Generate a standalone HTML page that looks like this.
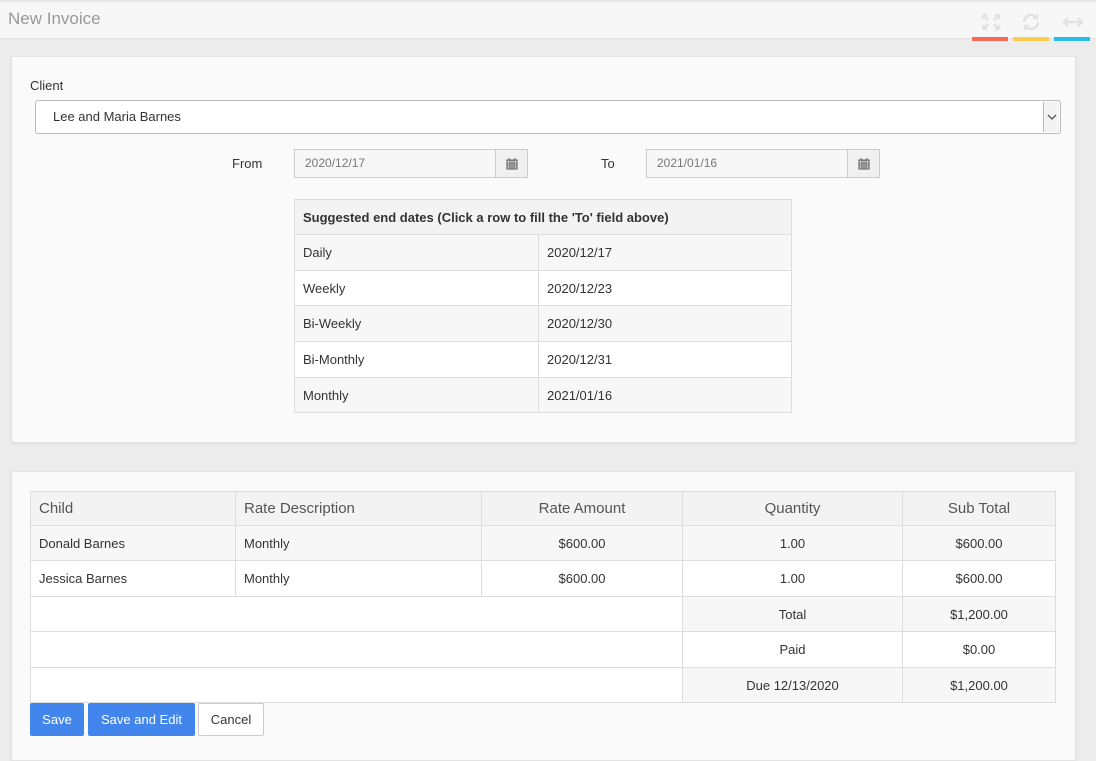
<!DOCTYPE html><html><head><style>
*{box-sizing:border-box;margin:0;padding:0}
body{width:1096px;height:742px;background:#ececec;font-family:"Liberation Sans",sans-serif;font-size:13px;color:#333;position:relative;overflow:hidden}
.a{position:absolute}
.hdr{left:0;top:0;width:1096px;height:39px;background:#f7f7f7;border-bottom:1px solid #e2e2e2;border-top:2px solid #e6e6e6}
.card{background:#fafafa;border:1px solid #e3e3e3;box-shadow:0 1px 2px rgba(0,0,0,.08)}
table{border-collapse:collapse;position:absolute}
td{border:1px solid #ddd;padding:0 8px}
.inp{background:#f7f7f7;border:1px solid #ccc;color:#777;font-size:12px;padding-left:10px;line-height:27px}
.add{background:#f0f0f0;border:1px solid #ccc;width:33px;height:29px;display:flex;align-items:center;justify-content:center}
.btn{height:33px;line-height:33px;text-align:center;border-radius:2px;font-size:13px}
</style></head><body>
<div class="a hdr"><div class="a" style="left:8px;top:7px;font-size:17px;color:#999">New Invoice</div>
<svg class="a" style="left:980px;top:10px" width="22" height="20" viewBox="0 0 22 20" fill="none" stroke="#e2e2e2" stroke-width="2.5"><path d="M3 3l5 5M3 3h4M3 3v4M19 3l-5 5M19 3h-4M19 3v4M3 17l5-5M3 17h4M3 17v-4M19 17l-5-5M19 17h-4M19 17v-4"/></svg>
<svg class="a" style="left:1020px;top:10px" width="22" height="20" viewBox="0 0 22 20" fill="none" stroke="#e2e2e2" stroke-width="2.5"><path d="M4 10a7 7 0 0 1 12-5M18 10a7 7 0 0 1-12 5"/><path d="M17 2v4h-4M5 18v-4h4"/></svg>
<svg class="a" style="left:1062px;top:12px" width="22" height="16" viewBox="0 0 22 16" fill="none" stroke="#e2e2e2" stroke-width="2.5"><path d="M2 8h18M6 4L2 8l4 4M16 4l4 4-4 4"/></svg>
</div>
<div class="a" style="left:972px;top:37px;width:36px;height:4px;background:#f96a52"></div>
<div class="a" style="left:1013px;top:37px;width:36px;height:4px;background:#fdcb4e"></div>
<div class="a" style="left:1054px;top:37px;width:36px;height:4px;background:#27bde8"></div>

<div class="a card" style="left:11px;top:56px;width:1065px;height:387px"></div>
<div class="a" style="left:30px;top:78px">Client</div>
<div class="a" style="left:35px;top:100px;width:1026px;height:34px;background:#fff;border:1px solid #bbb;border-radius:3px;line-height:32px;padding-left:17px">Lee and Maria Barnes</div>
<div class="a" style="left:1043px;top:102px;width:16px;height:30px;border-left:1px solid #bbb;background:#f3f3f3"><svg style="margin:11px 0 0 3px" width="10" height="8"><path d="M1 2l4 4 4-4" stroke="#555" fill="none" stroke-width="1.3"/></svg></div>
<div class="a" style="left:232px;top:156px">From</div>
<div class="a inp" style="left:294px;top:149px;width:202px;height:29px">2020/12/17</div>
<div class="a add" style="left:495px;top:149px"><svg width="12" height="12" viewBox="0 0 12 12"><rect x="1" y="2" width="10" height="9" fill="none" stroke="#555"/><path d="M1 5h10M4 2v9M6 2v9M8 2v9M1 7h10M1 9h10M3 0v3M9 0v3" stroke="#555" stroke-width=".8"/></svg></div>
<div class="a" style="left:601px;top:156px">To</div>
<div class="a inp" style="left:646px;top:149px;width:202px;height:29px">2021/01/16</div>
<div class="a add" style="left:847px;top:149px"><svg width="12" height="12" viewBox="0 0 12 12"><rect x="1" y="2" width="10" height="9" fill="none" stroke="#555"/><path d="M1 5h10M4 2v9M6 2v9M8 2v9M1 7h10M1 9h10M3 0v3M9 0v3" stroke="#555" stroke-width=".8"/></svg></div>

<table style="left:294px;top:199px;width:498px">
<tr style="height:35px;background:#f3f3f3"><td colspan="2" style="font-weight:bold">Suggested end dates (Click a row to fill the 'To' field above)</td></tr>
<tr style="height:36px;background:#f7f7f7"><td style="width:244px">Daily</td><td>2020/12/17</td></tr>
<tr style="height:35px;background:#fff"><td>Weekly</td><td>2020/12/23</td></tr>
<tr style="height:36px;background:#f7f7f7"><td>Bi-Weekly</td><td>2020/12/30</td></tr>
<tr style="height:36px;background:#fff"><td>Bi-Monthly</td><td>2020/12/31</td></tr>
<tr style="height:35px;background:#f7f7f7"><td>Monthly</td><td>2021/01/16</td></tr>
</table>

<div class="a card" style="left:11px;top:471px;width:1065px;height:290px"></div>
<table style="left:30px;top:491px;width:1026px">
<tr style="height:34px;background:#f3f3f3;font-size:15px;color:#555"><td style="width:205px">Child</td><td style="width:246px">Rate Description</td><td style="width:201px;text-align:center">Rate Amount</td><td style="width:220px;text-align:center">Quantity</td><td style="text-align:center">Sub Total</td></tr>
<tr style="height:35px;background:#f7f7f7"><td>Donald Barnes</td><td>Monthly</td><td style="text-align:center">$600.00</td><td style="text-align:center">1.00</td><td style="text-align:center">$600.00</td></tr>
<tr style="height:36px;background:#fff"><td>Jessica Barnes</td><td>Monthly</td><td style="text-align:center">$600.00</td><td style="text-align:center">1.00</td><td style="text-align:center">$600.00</td></tr>
<tr style="height:35px;background:#fff"><td colspan="3"></td><td style="text-align:center;background:#f7f7f7">Total</td><td style="text-align:center;background:#f7f7f7">$1,200.00</td></tr>
<tr style="height:36px;background:#fff"><td colspan="3"></td><td style="text-align:center">Paid</td><td style="text-align:center">$0.00</td></tr>
<tr style="height:35px;background:#fff"><td colspan="3"></td><td style="text-align:center;background:#f7f7f7">Due 12/13/2020</td><td style="text-align:center;background:#f7f7f7">$1,200.00</td></tr>
</table>
<div class="a btn" style="left:30px;top:703px;width:54px;background:#4286ed;color:#fff">Save</div>
<div class="a btn" style="left:88px;top:703px;width:107px;background:#4286ed;color:#fff">Save and Edit</div>
<div class="a btn" style="left:198px;top:703px;width:66px;background:#fff;border:1px solid #ccc;line-height:31px">Cancel</div>
</body></html>
